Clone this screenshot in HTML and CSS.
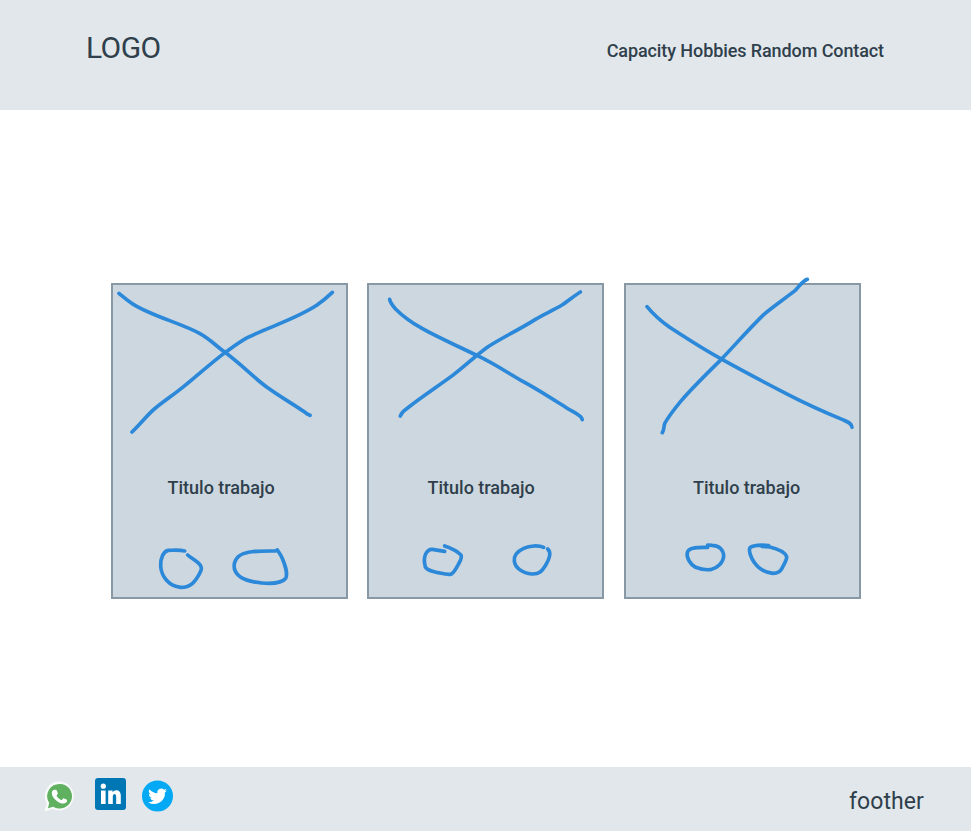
FILE: index.html
```html
<!DOCTYPE html>
<html lang="es">
<head>
<meta charset="utf-8">
<title>Portfolio</title>
<link rel="stylesheet" href="styles.css">
</head>
<body>
<header class="header">
  <div class="logo">LOGO</div>
  <nav class="nav"><a>Capacity</a> <a>Hobbies</a> <a>Random</a> <a>Contact</a></nav>
</header>
<main class="cards">
  <article class="card">
    <svg class="picture" viewBox="39 30 699 480">
      <path d="M57 55C75 70 85 79 100 88C160 125 245 145 300 176C326 190 348 212 375 232C425 269 460 307 500 336C541 366 580 387 615 412Q622 418 630 421"/>
      <path d="M697 52Q675 73 650 91C586 133 504 157 442 188C416 202 392 221 368 238C326 270 290 304 247 338C220 360 190 379 163 402C140 422 120 448 96 471"/>
    </svg>
    <h2 class="title title-one">Titulo trabajo</h2>
    <svg class="actions" viewBox="39 210 699 165">
      <path d="M254 243C238 239 218 241 205 241C191 243 181 264 182 288C184 320 207 349 242 352C276 352 287 331 298 312C306 298 307 291 297 281C287 271 273 264 263 255"/>
      <path d="M531 240L526 243C480 243 453 242 430 251C407 260 399 280 404 299C412 323 442 335 485 339C519 342 548 337 557 325C564 312 554 281 546 263C541 252 537 248 532 240"/>
    </svg>
  </article>
  <article class="card">
    <svg class="picture" viewBox="27 30 699 480">
      <path d="M89 73Q91 84 106 101C164 161 260 196 352 242C400 264 444 294 490 320C538 346 585 377 625 402C641 412 665 421 667 434"/>
      <path d="M661 51C643 62 625 78 606 90C580 106 550 118 525 134C480 163 429 186 383 216C347 242 315 273 277 302C232 335 181 368 139 402Q125 411 121 423"/>
    </svg>
    <h2 class="title title-two">Titulo trabajo</h2>
    <svg class="actions" viewBox="27 210 699 165">
      <path d="M254 244L217 238C205 237 201 244 197 252C192 262 193 279 196 291C202 302 217 304 230 307C245 310 258 314 271 313C281 311 287 297 295 283C302 270 307 264 303 255C293 245 272 234 254 228"/>
      <path d="M551 232C535 225 509 227 491 235C474 243 461 256 463 273C465 293 486 309 516 312C538 313 546 303 556 287C567 269 577 249 563 237"/>
    </svg>
  </article>
  <article class="card">
    <svg class="picture" viewBox="33 45 699 480">
      <path d="M96 110C110 127 133 150 164 172C210 202 267 239 317 266C380 301 450 338 518 373C570 400 630 427 683 449C699 456 711 460 711 472"/>
      <path d="M577 28C559 35 555 48 540 62C509 86 476 109 447 133C403 175 361 224 319 268C277 309 232 353 197 394C179 416 158 444 150 459C145 467 149 478 142 488"/>
    </svg>
    <h2 class="title title-three">Titulo trabajo</h2>
    <svg class="actions" viewBox="33 210 699 165">
      <path d="M278 232C250 233 221 231 217 248C214 263 225 283 242 292C260 299 276 301 290 298C309 293 324 278 326 259C326 240 313 226 291 226L278 225V231"/>
      <path d="M461 227C439 224 413 226 405 233C400 241 408 265 419 279C432 297 452 308 474 310C488 310 496 306 501 295C508 281 516 270 515 260C510 247 490 237 464 231L441 229"/>
    </svg>
  </article>
</main>
<footer class="footer">
  <div class="social">
    <svg class="whatsapp" viewBox="0 0 32 32">
      <path fill="#f8faf9" d="M16 .5A15 15 0 1 1 9 29L.5 31.5 2.8 23A15 15 0 0 1 16 .5Z"/>
      <path fill="#5fb160" d="M16.3 3A12.7 12.7 0 1 1 9.500 26.500L4 28 5.500 22.800A12.700 12.700 0 0 1 16.300 3Z"/>
      <path fill="#fff" d="M11.100 9.100h1.100c.5 0 .8.3 1 .8l1 2.600c.2.5 0 .9-.3 1.300l-1 1.200c.9 1.900 2.900 3.900 5.200 4.900l1.500-1.700c.3-.4.7-.4 1.200-.2l2.500 1.200c.5.3.7.5.6 1-.2 2-1.900 3.100-3.600 3.100-5.500 0-12.300-6.100-12.300-11 0-1.500 1.200-3.200 3.100-3.200Z"/>
    </svg>
    <svg class="linkedin" viewBox="0 0 31 32">
      <rect width="31" height="32" rx="3" fill="#0077b5"/>
      <circle cx="8.300" cy="8.200" r="2.600" fill="#fff"/>
      <path fill="#fff" d="M6 12.400h4.600V26H6ZM13.200 12.400h4.400v1.800c1.900-3.100 8.200-3.100 8.200 3.300V26h-4.600v-7.100c0-4.100-3.400-3.600-3.400-.3V26h-4.600Z"/>
    </svg>
    <svg class="twitter" viewBox="0 0 32 32">
      <circle cx="16" cy="16" r="16" fill="#03a9f4"/>
      <path fill="#fff" d="M25.700 10.200a8 8 0 0 1-2.200.6 4 4 0 0 0 1.700-2.200 8 8 0 0 1-2.500 1 4 4 0 0 0-6.800 3.600 11.300 11.300 0 0 1-8.200-4.100 4 4 0 0 0 1.200 5.300 4 4 0 0 1-1.800-.5 4 4 0 0 0 3.200 4 4 4 0 0 1-1.800.1 4 4 0 0 0 3.700 2.700A8 8 0 0 1 6.300 22.400a11.300 11.300 0 0 0 17.400-10.100 8 8 0 0 0 2-2.100Z"/>
    </svg>
  </div>
  <p class="footer-text">foother</p>
</footer>
</body>
</html>
```
FILE: styles.css
```css
* {
  box-sizing: border-box;
}

body {
  margin: 0;
  height: 831px;
  display: flex;
  flex-direction: column;
  overflow: hidden;
  background: #fff;
  color: #2f3f4c;
  font-family: Roboto, "Liberation Sans", sans-serif;
}

.header {
  height: 110px;
  padding: 30px 87px 0 86px;
  display: flex;
  justify-content: space-between;
  align-items: flex-start;
  background: #e2e7eb;
}

.logo {
  font-size: 30px;
  line-height: 36px;
  letter-spacing: -0.6px;
}

.nav {
  padding-top: 10px;
  font-size: 18px;
  line-height: 22px;
  font-weight: 500;
  letter-spacing: -0.1px;
  white-space: nowrap;
}

.cards {
  flex: 1;
  padding: 173px 0 0 111px;
  display: grid;
  grid-template-columns: repeat(3, 237px);
  column-gap: 19.5px;
  align-items: start;
}

.card {
  height: 316px;
  border: 2px solid #8898a5;
  background: #cdd7df;
}

.card:nth-child(2) {
  margin: 0 0.5px 0 -0.5px;
}

.card svg {
  display: block;
  width: 233px;
  overflow: visible;
  fill: none;
  stroke: #2c88d9;
  stroke-width: 11;
  stroke-linecap: round;
  stroke-linejoin: round;
}

.card .picture {
  height: 160px;
}

.card .actions {
  height: 55px;
  margin-top: 41px;
}

.title {
  margin: 31px 0 0;
  font-size: 18px;
  line-height: 23px;
  font-weight: 500;
  white-space: nowrap;
}

.title-one {
  padding-left: 54.5px;
}

.title-two {
  padding-left: 58.5px;
}

.title-three {
  padding-left: 67px;
}

.footer {
  height: 64px;
  padding: 11px 47px 0 44px;
  display: flex;
  justify-content: space-between;
  align-items: flex-start;
  background: #e2e7eb;
}

.social {
  display: flex;
  align-items: flex-start;
}

.whatsapp {
  width: 31px;
  height: 31px;
  margin-top: 3px;
}

.linkedin {
  width: 31px;
  height: 32px;
  margin-left: 20px;
}

.twitter {
  width: 31px;
  height: 32px;
  margin: 2px 0 0 16px;
}

.footer-text {
  margin: 10px 0 0;
  font-size: 23px;
  line-height: 28px;
  letter-spacing: 0.1px;
}
```
